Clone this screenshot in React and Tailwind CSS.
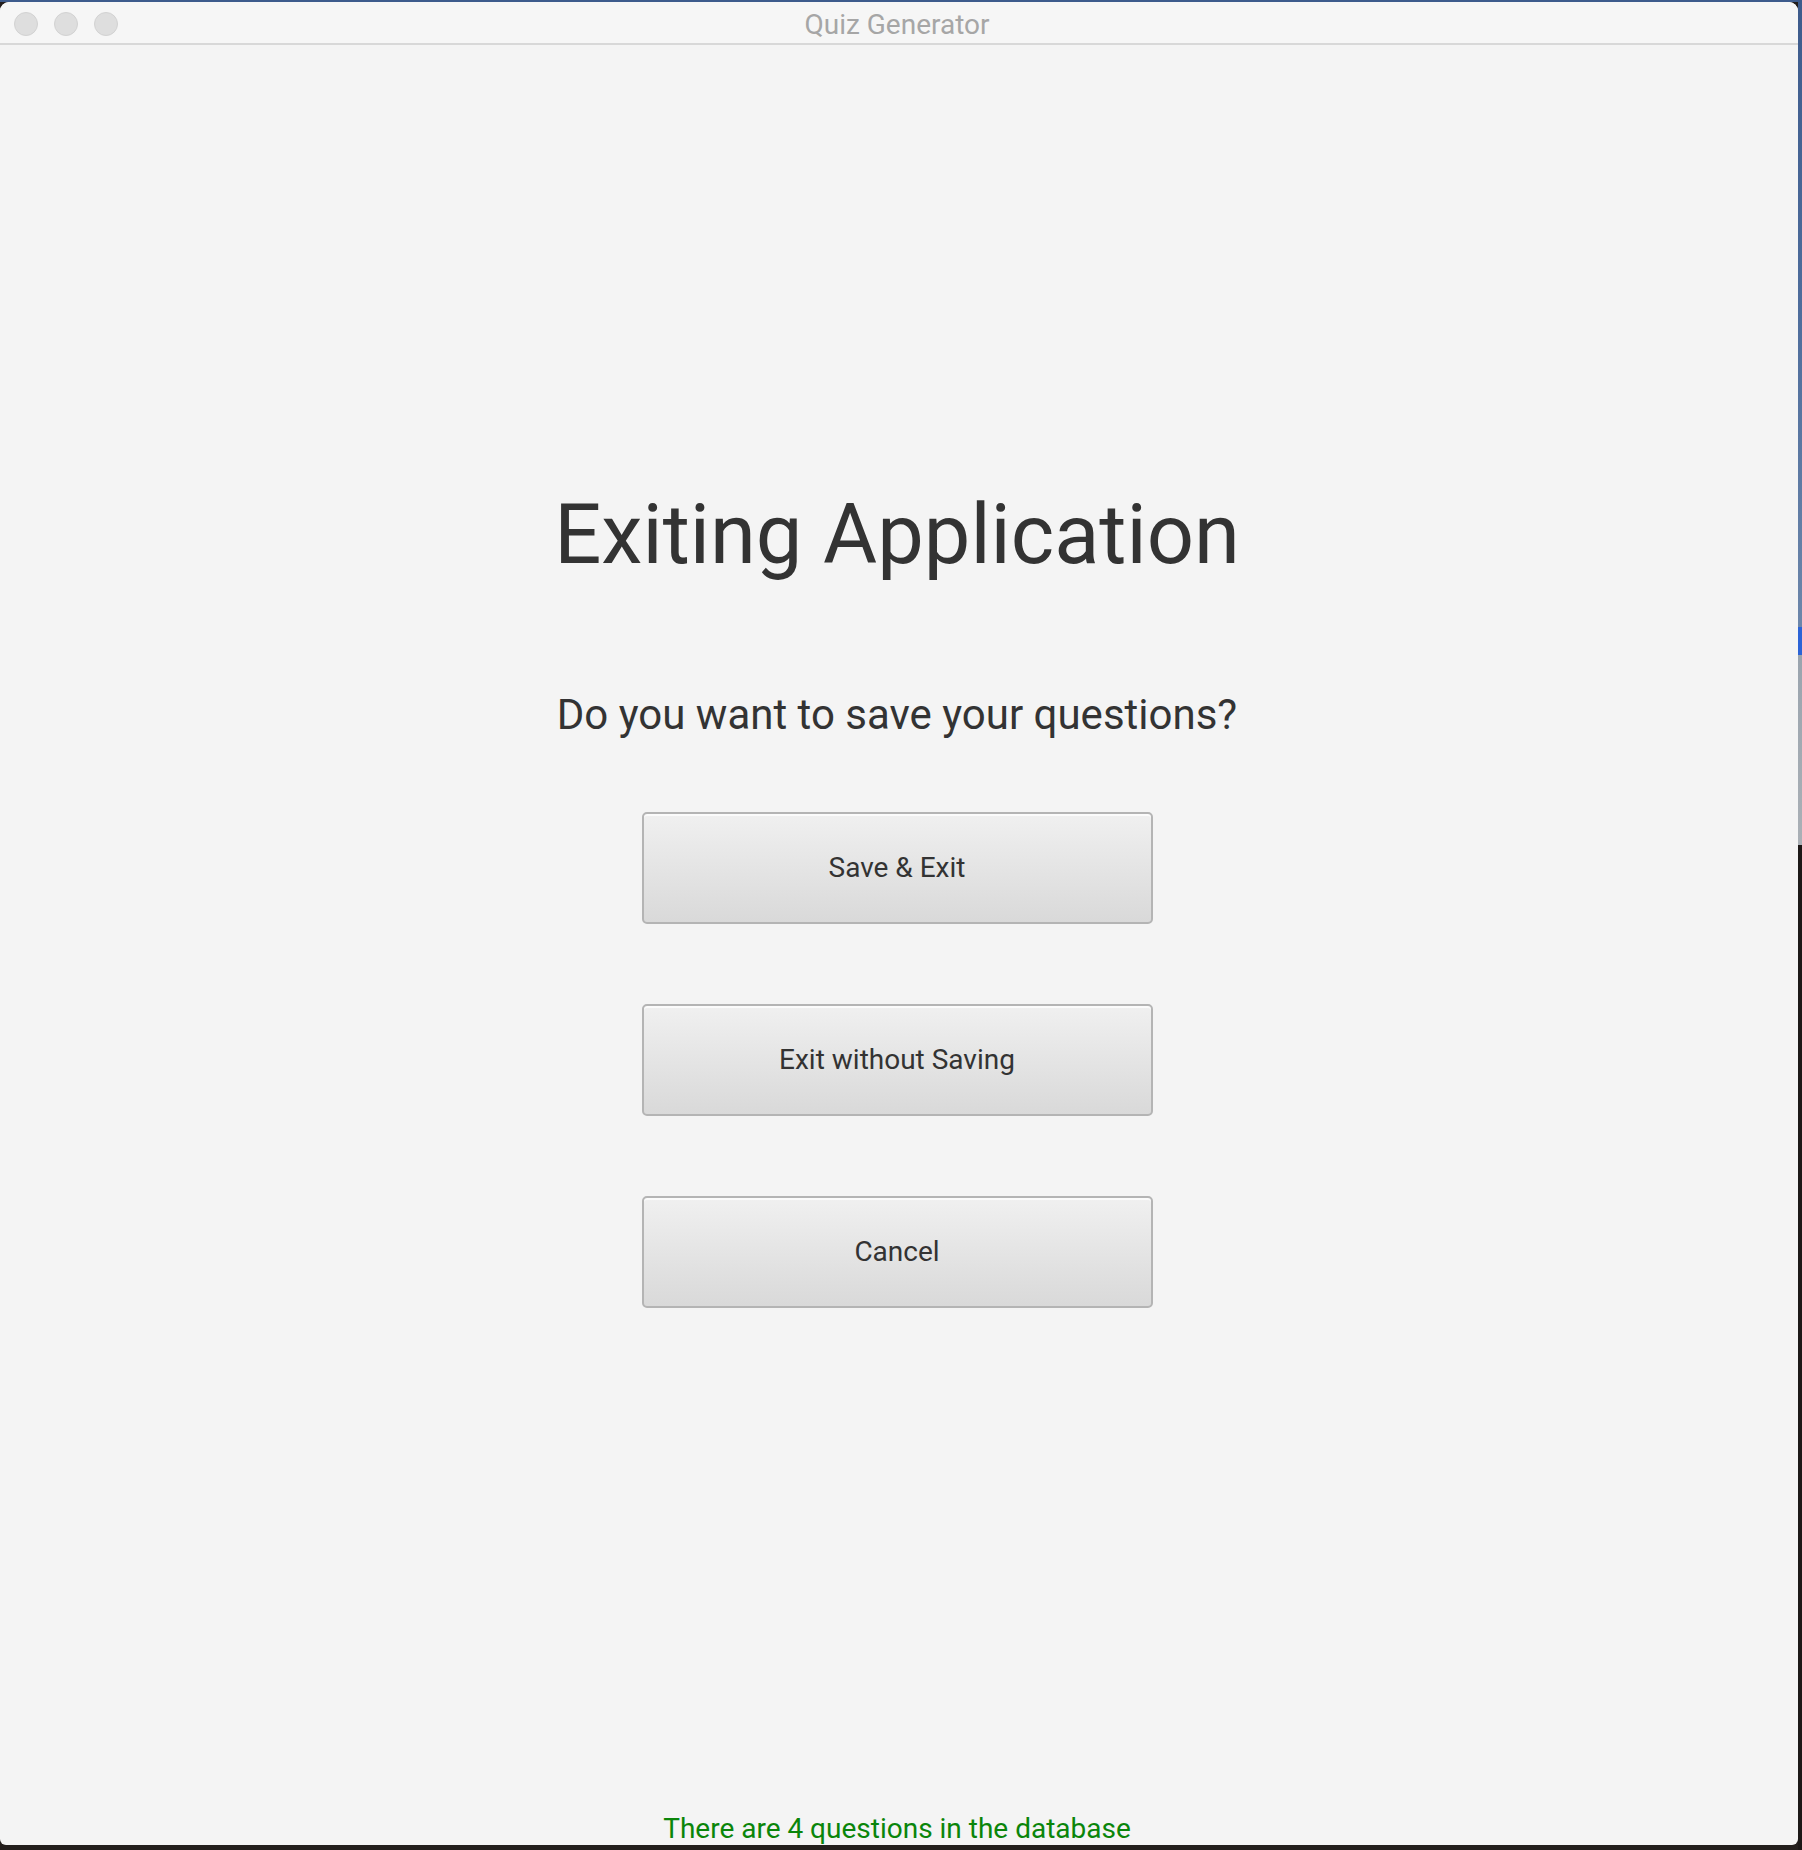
import React from "react";

function Light() {
  return <div className="w-[24px] h-[24px] rounded-full bg-[#dedede] border border-[#d2d2d2]" />;
}

function Btn({ children }) {
  return (
    <button className="w-[511px] h-[112px] rounded-[5px] border-2 border-[#b4b4b4] bg-gradient-to-b from-[#f0f0f0] to-[#d9d9d9] shadow-[inset_0_2px_0_#fbfbfb] text-[28px] leading-none text-[#333333] flex items-center justify-center">
      {children}
    </button>
  );
}

export default function App() {
  return (
    <div className="w-[1802px] h-[1850px] flex bg-[#231e1c] overflow-hidden" style={{ fontFamily: "Roboto, 'Liberation Sans', sans-serif" }}>
      <div className="w-[1798px] h-full flex flex-col">
        <div className="h-[2px] bg-[#3d5b8c]" />
        <div className="h-[1843px] rounded-t-[9px] rounded-b-[6px] bg-[#f4f4f4] flex flex-col overflow-hidden">
          <div className="h-[43px] bg-[#f6f6f6] border-b-[2px] border-[#d8d8d8] relative flex items-center justify-center shrink-0">
            <div className="absolute left-[14px] top-[10px] flex gap-[16px]">
              <Light />
              <Light />
              <Light />
            </div>
            <span className="text-[28px] leading-none text-[#a6a6a6] mt-[4px] pr-[4px]">Quiz Generator</span>
          </div>
          <div className="flex-1 flex flex-col items-center pt-[448px] pr-[4px]">
            <h1 className="text-[83px] leading-none text-[#333333]">Exiting Application</h1>
            <p className="mt-[118px] text-[42px] leading-none text-[#333333]">Do you want to save your questions?</p>
            <div className="mt-[76px] flex flex-col gap-[80px]">
              <Btn>Save &amp; Exit</Btn>
              <Btn>Exit without Saving</Btn>
              <Btn>Cancel</Btn>
            </div>
            <p className="mt-auto mb-[2px] text-[28px] leading-none text-[#0a850a]">There are 4 questions in the database</p>
          </div>
        </div>
        <div className="flex-1 bg-[#231e1c]" />
      </div>
      <div className="w-[4px] h-full flex flex-col">
        <div className="h-[627px] bg-gradient-to-b from-[#3d5b8c] via-[#4e6d9c] to-[#6c86aa]" />
        <div className="h-[28px] bg-[#2b63d6]" />
        <div className="h-[190px] bg-gradient-to-b from-[#9aa4ae] to-[#aab0b6]" />
        <div className="flex-1 bg-[#1c1817]" />
      </div>
    </div>
  );
}
